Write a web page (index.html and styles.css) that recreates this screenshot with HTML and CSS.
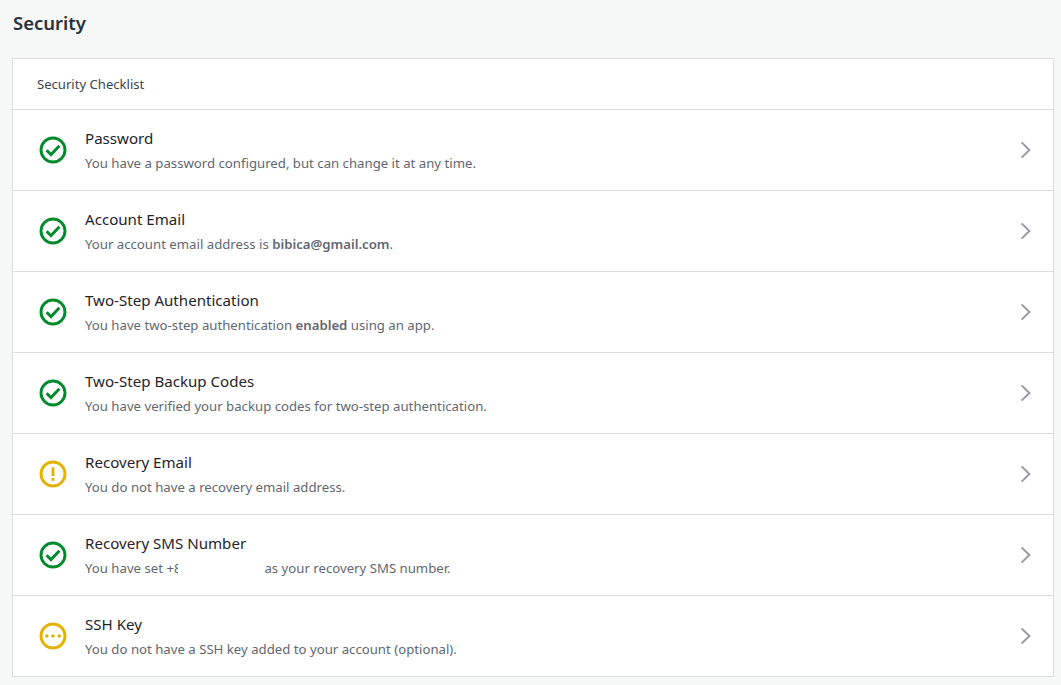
FILE: index.html
```
<!DOCTYPE html>
<html lang="en">
<head>
<meta charset="utf-8">
<title>Security</title>
<link rel="stylesheet" href="styles.css">
</head>
<body>
<svg class="defs" width="0" height="0" aria-hidden="true">
  <symbol id="ok" viewBox="0 0 28 28"><circle cx="14" cy="14" r="12" fill="none" stroke="currentColor" stroke-width="2.9"/><path d="M7.6 14.2l4.4 4.4 8.4-8.8" fill="none" stroke="currentColor" stroke-width="2.9"/></symbol>
  <symbol id="warn" viewBox="0 0 28 28"><circle cx="14" cy="14" r="12" fill="none" stroke="currentColor" stroke-width="2.9"/><rect x="12.6" y="7.4" width="2.8" height="8.6" fill="currentColor"/><rect x="12.6" y="18" width="2.8" height="2.8" fill="currentColor"/></symbol>
  <symbol id="more" viewBox="0 0 28 28"><circle cx="14" cy="14" r="12" fill="none" stroke="currentColor" stroke-width="2.9"/><circle cx="7.8" cy="14" r="1.8" fill="currentColor"/><circle cx="14" cy="14" r="1.8" fill="currentColor"/><circle cx="20.2" cy="14" r="1.8" fill="currentColor"/></symbol>
  <symbol id="chev" viewBox="0 0 12 18"><path d="M1.6 1.4L9.4 9l-7.8 7.6" fill="none" stroke="currentColor" stroke-width="2"/></symbol>
</svg>
<main class="page">
  <h1 class="title">Security</h1>
  <section class="card">
    <header class="card-head">Security Checklist</header>
    <a class="row"><svg class="icon ok"><use href="#ok"/></svg><div class="text"><div class="name">Password</div><div class="desc">You have a password configured, but can change it at any time.</div></div><svg class="chev"><use href="#chev"/></svg></a>
    <a class="row"><svg class="icon ok"><use href="#ok"/></svg><div class="text"><div class="name">Account Email</div><div class="desc">Your account email address is <b>bibica@gmail.com</b>.</div></div><svg class="chev"><use href="#chev"/></svg></a>
    <a class="row"><svg class="icon ok"><use href="#ok"/></svg><div class="text"><div class="name">Two-Step Authentication</div><div class="desc">You have two-step authentication <b>enabled</b> using an app.</div></div><svg class="chev"><use href="#chev"/></svg></a>
    <a class="row"><svg class="icon ok"><use href="#ok"/></svg><div class="text"><div class="name">Two-Step Backup Codes</div><div class="desc">You have verified your backup codes for two-step authentication.</div></div><svg class="chev"><use href="#chev"/></svg></a>
    <a class="row"><svg class="icon warn"><use href="#warn"/></svg><div class="text"><div class="name">Recovery Email</div><div class="desc">You do not have a recovery email address.</div></div><svg class="chev"><use href="#chev"/></svg></a>
    <a class="row"><svg class="icon ok"><use href="#ok"/></svg><div class="text"><div class="name">Recovery SMS Number</div><div class="desc">You have set <span class="phone">+84</span>as your recovery SMS number.</div></div><svg class="chev"><use href="#chev"/></svg></a>
    <a class="row"><svg class="icon warn"><use href="#more"/></svg><div class="text"><div class="name">SSH Key</div><div class="desc">You do not have a SSH key added to your account (optional).</div></div><svg class="chev"><use href="#chev"/></svg></a>
  </section>
</main>
</body>
</html>
```
FILE: styles.css
```
* { box-sizing: border-box; }
html, body { margin: 0; height: 100%; }
body {
  background: #f6f8f8;
  font-family: "Noto Sans", "Open Sans", sans-serif;
  overflow: hidden;
}
.defs { position: absolute; }
.page { padding: 0 7px 0 12px; }
.title {
  margin: 0;
  padding: 9px 0 0 1px;
  height: 58px;
  font-size: 18.5px;
  line-height: 28px;
  font-weight: 600;
  color: #2a313a;
}
.card {
  background: #fff;
  border: 1px solid #dcdcdc;
}
.card-head {
  height: 51px;
  padding: 15px 24px 0;
  font-size: 13.1px;
  line-height: 20px;
  color: #3d4550;
  border-bottom: 1px solid #dcdcdc;
}
.row {
  display: flex;
  align-items: center;
  height: 81px;
  padding: 0 21px 0 26px;
  border-bottom: 1px solid #dcdcdc;
}
.row:last-child { border-bottom: 0; height: 80px; }
.icon { width: 28px; height: 28px; flex: none; }
.ok { color: #008a2c; }
.warn { color: #e3b100; }
.text { flex: 1; margin-left: 18px; }
.name { font-size: 15.1px; line-height: 22px; color: #1f2429; }
.desc { margin-top: 4px; font-size: 13.2px; line-height: 20px; color: #5f6771; }
.desc b { font-weight: 600; }
.phone {
  display: inline-block;
  width: 12px;
  margin-right: 86px;
  overflow: hidden;
  vertical-align: bottom;
}
.chev { width: 12px; height: 18px; flex: none; color: #969ca3; }
```
